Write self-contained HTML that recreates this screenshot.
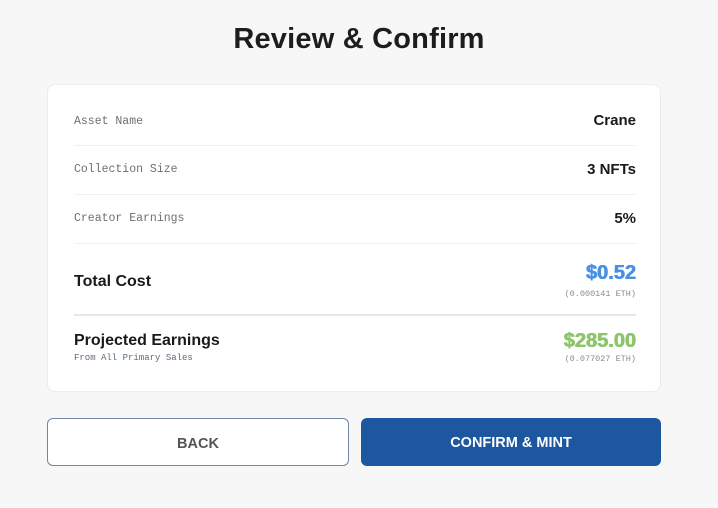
<!DOCTYPE html>
<html><head><style>
body{margin:0;width:718px;height:508px;background:#f7f7f7;font-family:"Liberation Sans",sans-serif;position:relative;overflow:hidden}
.t{position:absolute;top:23px;left:0;width:718px;text-align:center;font-size:29px;font-weight:bold;color:#1d1d1d;letter-spacing:0.2px}
.card{position:absolute;left:47px;top:84px;width:612px;height:306px;background:#fff;border:1px solid #ececec;border-radius:8px}
.lbl{position:absolute;left:26px;font-family:"Liberation Mono",monospace;font-size:11.5px;color:#6f6f6f}
.val{position:absolute;right:24px;font-size:15px;font-weight:bold;color:#1a1a1a}
.hr{position:absolute;left:26px;right:24px;height:1px;background:#f1f1f1}
.big{position:absolute;left:26px;font-size:16px;font-weight:bold;color:#1a1a1a}
.sm{position:absolute;right:24px;font-family:"Liberation Mono",monospace;font-size:8.5px;color:#8a8a8a}
.btn{position:absolute;top:418px;height:48px;border-radius:6px;font-size:14.5px;font-weight:bold;text-align:center;line-height:50px;box-sizing:border-box}
.num{font-weight:bold;text-shadow:0.5px 0 0 currentColor,-0.3px 0 0 currentColor}
</style></head><body>
<div class="t">Review &amp; Confirm</div>
<div class="card">
<div class="lbl" style="top:30px">Asset Name</div><div class="val" style="top:27px">Crane</div>
<div class="hr" style="top:60px"></div>
<div class="lbl" style="top:78px">Collection Size</div><div class="val" style="top:76px">3 NFTs</div>
<div class="hr" style="top:109px"></div>
<div class="lbl" style="top:127px">Creator Earnings</div><div class="val" style="top:125px">5%</div>
<div class="hr" style="top:158px"></div>
<div class="big" style="top:188px">Total Cost</div>
<div class="val num" style="top:177px;font-size:20px;color:#4a90e2">$0.52</div>
<div class="sm" style="top:204px">(0.000141 ETH)</div>
<div class="hr" style="top:229px;height:2px;background:#e6e6e6"></div>
<div class="big" style="top:247px">Projected Earnings</div>
<div class="lbl" style="top:268px;font-size:9px;color:#5a6b7b">From All Primary Sales</div>
<div class="val num" style="top:245px;font-size:20px;color:#8cc56a">$285.00</div>
<div class="sm" style="top:269px">(0.077027 ETH)</div>
</div>
<div class="btn" style="left:47px;width:302px;background:#fff;border:1px solid #6e86a8;color:#555">BACK</div>
<div class="btn" style="left:361px;width:300px;background:#1c57a0;color:#fff">CONFIRM &amp; MINT</div>
</body></html>
